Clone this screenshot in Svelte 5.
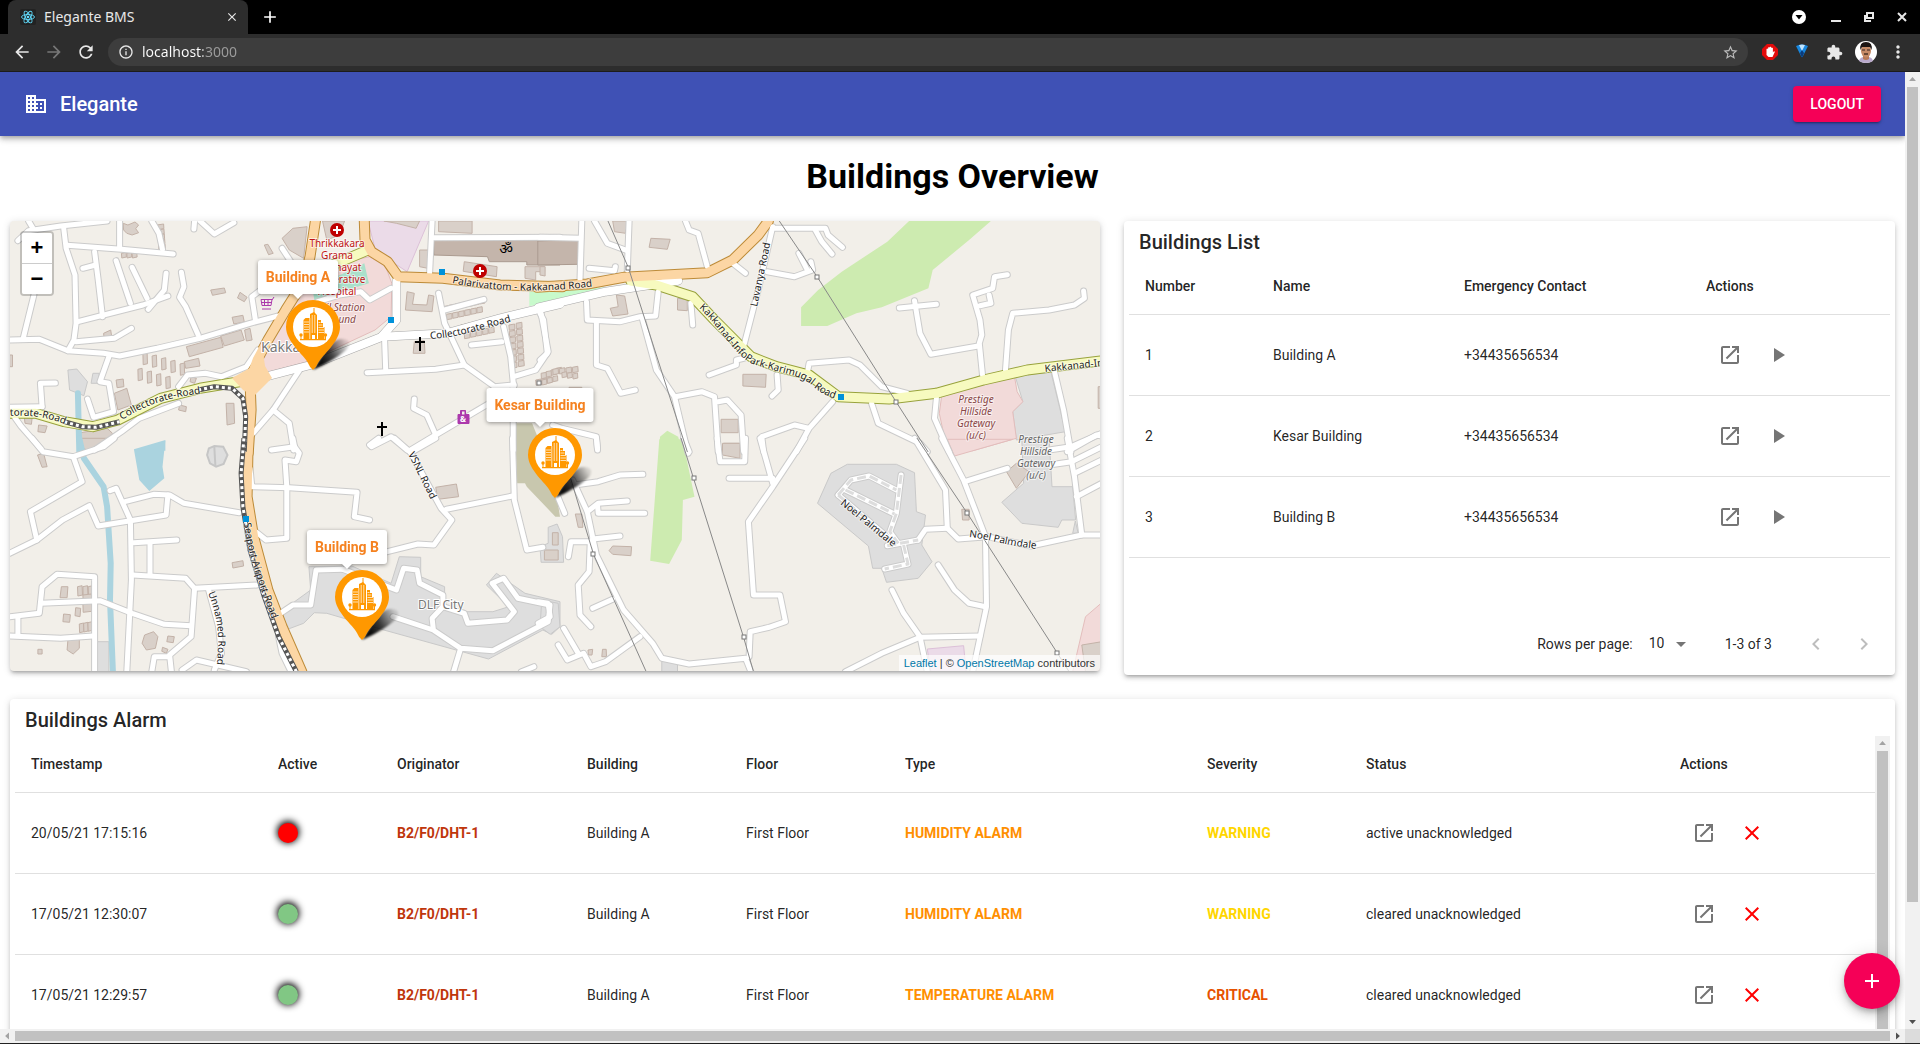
<script>
  const icons = {
    open: 'M19 19H5V5h7V3H5c-1.11 0-2 .9-2 2v14c0 1.1.89 2 2 2h14c1.1 0 2-.9 2-2v-7h-2v7zM14 3v2h3.59l-9.83 9.83 1.41 1.41L19 6.41V10h2V3h-7z',
    play: 'M8 5v14l11-7z',
    clear: 'M19 6.41L17.59 5 12 10.59 6.41 5 5 6.41 10.59 12 5 17.59 6.41 19 12 13.41 17.59 19 19 17.59 13.41 12z',
    add: 'M19 13h-6v6h-2v-6H5v-2h6V5h2v6h6v2z',
    down: 'M7 10l5 5 5-5z',
    left: 'M15.41 7.41L14 6l-6 6 6 6 1.41-1.41L10.83 12z',
    right: 'M10 6L8.59 7.41 13.17 12l-4.58 4.59L10 18l6-6z',
    domain: 'M12 7V3H2v18h20V7H12zM6 19H4v-2h2v2zm0-4H4v-2h2v2zm0-4H4V9h2v2zm0-4H4V5h2v2zm4 12H8v-2h2v2zm0-4H8v-2h2v2zm0-4H8V9h2v2zm0-4H8V5h2v2zm10 12h-8v-2h2v-2h-2v-2h2v-2h-2V9h8v10zm-2-8h-2v2h2v-2zm0 4h-2v2h2v-2z',
    back: 'M20 11H7.83l5.59-5.59L12 4l-8 8 8 8 1.41-1.41L7.83 13H20v-2z',
    forward: 'M12 4l-1.41 1.41L16.17 11H4v2h12.17l-5.58 5.59L12 20l8-8z',
    reload: 'M17.65 6.35C16.2 4.9 14.21 4 12 4c-4.42 0-7.99 3.58-7.99 8s3.57 8 7.99 8c3.73 0 6.84-2.55 7.73-6h-2.08c-.82 2.33-3.04 4-5.65 4-3.31 0-6-2.69-6-6s2.69-6 6-6c1.66 0 3.14.69 4.22 1.78L13 11h7V4l-2.35 2.35z',
    info: 'M11 7h2v2h-2zm0 4h2v6h-2zm1-9C6.48 2 2 6.48 2 12s4.48 10 10 10 10-4.48 10-10S17.52 2 12 2zm0 18c-4.41 0-8-3.59-8-8s3.59-8 8-8 8 3.59 8 8-3.59 8-8 8z',
    star: 'M22 9.24l-7.19-.62L12 2 9.19 8.63 2 9.24l5.46 4.73L5.82 21 12 17.27 18.18 21l-1.63-7.03L22 9.24zM12 15.4l-3.76 2.27 1-4.28-3.32-2.88 4.38-.38L12 6.1l1.71 4.04 4.38.38-3.32 2.88 1 4.28L12 15.4z',
    puzzle: 'M20.5 11H19V7c0-1.1-.9-2-2-2h-4V3.500C13 2.120 11.880 1 10.500 1S8 2.120 8 3.500V5H4c-1.100 0-1.990.9-1.990 2v3.800H3.500c1.490 0 2.700 1.210 2.700 2.700s-1.210 2.700-2.700 2.700H2V20c0 1.100.9 2 2 2h3.800v-1.500c0-1.490 1.210-2.700 2.700-2.700 1.490 0 2.700 1.210 2.700 2.700V22H17c1.100 0 2-.9 2-2v-4h1.500c1.380 0 2.500-1.120 2.500-2.500S21.880 11 20.500 11z',
    dots: 'M12 8c1.1 0 2-.9 2-2s-.9-2-2-2-2 .9-2 2 .9 2 2 2zm0 2c-1.100 0-2 .9-2 2s.9 2 2 2 2-.9 2-2-.9-2-2-2zm0 6c-1.100 0-2 .9-2 2s.9 2 2 2 2-.9 2-2-.9-2-2-2z'
  };

  const buildingCols = [
    ['Number', 128], ['Name', 191], ['Emergency Contact', 242], ['Actions', 200]
  ];
  const buildings = [
    { id: 1, name: 'Building A', phone: '+34435656534' },
    { id: 2, name: 'Kesar Building', phone: '+34435656534' },
    { id: 3, name: 'Building B', phone: '+34435656534' }
  ];

  const alarmCols = [
    ['Timestamp', 247], ['Active', 119], ['Originator', 190], ['Building', 159], ['Floor', 159],
    ['Type', 302], ['Severity', 159], ['Status', 314], ['Actions', 211]
  ];
  const alarms = [
    { time: '20/05/21 17:15:16', active: true, type: 'HUMIDITY ALARM', severity: 'WARNING', status: 'active unacknowledged' },
    { time: '17/05/21 12:30:07', active: false, type: 'HUMIDITY ALARM', severity: 'WARNING', status: 'cleared unacknowledged' },
    { time: '17/05/21 12:29:57', active: false, type: 'TEMPERATURE ALARM', severity: 'CRITICAL', status: 'cleared unacknowledged' }
  ];

  const share = (cols, w) => `${(w / cols.reduce((s, c) => s + c[1], 0)) * 100}%`;

  const markers = [
    { name: 'Building A', x: 313, y: 370, tipX: 298, w: 80 },
    { name: 'Kesar Building', x: 555, y: 498, tipX: 540, w: 107 },
    { name: 'Building B', x: 362, y: 640, tipX: 347, w: 80 }
  ];

  // Map sheets: every sheet keeps its own grid and is projected onto the common map plane.
  const sheets = [
    {
      x: 0, y: 210, kx: 2.8,
      minor: [
        '50,92 80,62 170,48 300,33', '80,33 92,55', '178,52 185,115 210,195 213,340 207,390 190,422', '188,106 340,118 485,132',
        '335,33 335,115', '425,33 445,70 455,118', '265,125 275,210 287,320', '232,175 268,165', '325,152 365,280',
        '370,172 412,265', '465,190 460,240 415,298', '218,335 400,285 470,258', '508,187 515,230 503,262 520,290 555,375',
        '95,255 65,385', '27,390 110,388 190,422 290,430 335,438 440,415 560,385 700,340 790,315', '213,395 320,385 368,355',
        '305,440 280,515 305,520 318,605 262,622 245,567', '155,519 113,520 118,590', '27,592 118,590', '27,600 60,650 115,717',
        '715,330 705,260 730,240', '840,478 765,600 700,680', '765,600 810,640 822,720', '500,530 525,495 575,490 620,500 690,470 722,420',
        '545,33 543,57', '560,33 600,72 655,38', '790,115 820,165', '1210,33 1203,190', '1215,83 1568,82',
        '1228,250 1245,340 1300,465 1385,530 1440,525', '1245,300 1355,268', '1410,350 1430,440 1438,530', '1515,310 1535,425 1500,480 1438,500',
        '1077,390 1080,480', '1028,488 1220,478 1300,465', '1320,405 1405,395', '1160,567 1158,595 1195,615 1220,675',
        '1040,710 1095,680 1140,720', '1150,720 1220,675 1370,580', '890,275 950,255 1010,245 1035,270 1095,235', '265,720 340,665 390,625 500,580',
        '1437,520 1437,720'
      ],
      major: ['725,505 870,465 1070,380 1250,370 1400,325 1568,282', '1110,215 1110,330 1070,378'],
      yellow: ['27,610 100,610 180,635 260,650 330,630 450,565 560,535 700,510', '910,175 1030,120'],
      orange: ['883,33 868,140 850,215 800,300 750,390 720,450 700,510 703,600 695,730', '1020,33 1022,90 1040,125 1085,155 1115,200 1240,205 1400,225 1575,230'],
      rail: ['555,540 600,530 650,535 680,565 688,620 684,725', '180,635 230,650 270,652 335,635'],
      river: ['218,550 222,725'],
      power: [],
      site: [],
      areas: [
        ['pink', '1035,140 1080,170 1097,220 1095,320 1050,360 860,455 740,490 735,430 770,340 830,270 860,180'],
        ['lilac', '1030,33 1200,33 1140,185 1090,150 1050,115'],
        ['teal', '875,235 1020,160 1033,220 880,270'],
        ['brown', '1215,90 1568,90 1568,165 1475,165 1475,155 1370,155 1365,140 1215,135'],
        ['house', '790,85 820,55 860,50 850,145 810,120'],
        ['mint', '1482,245 1568,235 1568,275 1482,288'],
        ['olive', '1437,640 1490,640 1520,720 1437,720'],
        ['water', '378,720 463,692 463,722'],
        ['grey', '190,480 215,477 245,515 235,557 195,540'],
        ['grey', '260,490 278,490 275,520 255,520'],
        ['house', '225,668 300,655 315,670 290,700 230,720'],
        ['house', '345,40 358,45 378,36 388,45 380,56 388,68 370,75 355,70 346,60'],
        ['house', '522,410 618,382 625,412 530,440'],
        ['house', '618,378 675,360 684,390 628,408'],
        ['house', '685,360 700,355 706,390 690,393'],
        ['house', '590,240 628,234 632,248 595,256'],
        ['house', '672,247 692,262 684,275 665,264'],
        ['house', '650,322 680,316 684,336 655,342'],
        ['house', '290,370 310,360 314,388 292,392'],
        ['house', '320,550 355,535 368,585 330,600'],
        ['house', '325,510 345,507 347,530 328,533'],
        ['house', '516,455 556,445 560,468 520,475'],
        ['house', '740,105 750,103 765,130 752,134'],
        ['house', '633,580 655,580 657,640 636,645'],
        ['house', '108,645 132,648 126,668 106,665'],
        ['house', '68,622 90,624 88,643 70,640'],
        ['house', '903,33 965,33 950,75 915,90'],
        ['house', '1075,33 1175,33 1165,55 1110,40'],
        ['house', '1228,33 1322,33 1322,70 1228,65'],
        ['house', '1175,120 1200,120 1198,175 1175,170'],
        ['house', '1300,155 1392,170 1390,200 1297,184'],
        ['house', '1470,170 1525,170 1525,185 1500,185 1500,210 1470,205'],
        ['house', '1140,245 1160,250 1155,283 1195,285 1200,255 1215,258 1210,305 1135,300'],
        ['house', '1160,395 1188,392 1190,430 1157,430'],
        ['house', '27,435 35,435 35,470 27,470'],
        ['house', '535,500 550,505 545,520 532,515'],
        ['house', '478,548 495,552 490,565 476,560'],
        ['house', '503,585 522,590 520,605 500,600']
      ],
      rows: [
        [400, 430, 5, 12, 34, 26, 8], [386, 478, 4, 12, 34, 26, 8], [440, 45, 6, 18, 14, 1, 15], [340, 130, 3, 13, 14, 15, 0],
        [1240, 290, 7, 15, 16, 17, -4], [1250, 313, 6, 15, 16, 17, -4], [1290, 345, 6, 15, 16, 17, -4], [1300, 370, 5, 15, 16, 17, -4],
        [1425, 345, 7, 16, 16, 1, 19], [1445, 340, 7, 16, 16, 1, 19], [1515, 490, 4, 15, 16, 14, -5], [1500, 510, 3, 15, 16, 15, -3]
      ]
    },
    {
      x: 540, y: 210, kx: 2.75,
      minor: [
        '0,82 112,85', '115,33 110,210', '150,33 185,100 240,122', '245,33 240,180', '135,175 205,182 207,170', '400,33 410,60 435,70 460,170',
        '525,155 565,190', '645,55 785,55 792,75 832,112', '757,60 775,95 803,132', '712,130 735,180', '745,155 750,180 700,200 625,185',
        '640,50 600,240 560,410', '560,445 540,450 540,465 465,495', '128,275 130,330 220,335 275,320 318,318 325,245',
        '155,340 155,465 185,475 222,550 262,540', '415,280 420,345', '280,320 320,480 370,560 407,730', '372,560 445,545 480,560 490,725',
        '490,575 515,570 553,615 560,725', '652,495 655,540 638,558', '735,490 740,460 850,450 880,465 940,530 1010,550',
        '805,575 740,655 705,725', '738,655 700,645 610,680 615,725', '912,580 930,640 1045,700 1065,725', '1090,565 1085,625 1125,725',
        '988,294 1090,283', '1030,272 1045,370 1075,433 1205,408', '1285,194 1250,200 1245,235 1190,255 1210,330 1215,375 1208,400 1217,495',
        '1210,287 1240,280 1235,255', '1495,243 1497,265 1470,285 1400,300 1300,310 1288,360 1280,480', '1415,485 1440,600 1460,725',
        '1450,725 1530,675 1545,678', '0,310 10,330 20,430 0,450', '35,645 60,655 155,680 158,720'
      ],
      major: ['-4,292 180,245 380,212'],
      yellow: ['250,213 320,225 420,260 480,330 580,440 650,470 740,495 820,560 960,567 1090,550 1220,510 1340,480 1545,452'],
      orange: ['-8,232 130,222 230,202 460,188 530,150 600,75 628,33'],
      rail: [], river: [], site: [],
      power: ['187,33 243,173 405,725', '658,33 763,202 980,577 1067,725'],
      areas: [
        ['green', '718,292 765,240 830,185 955,95 1015,33 1240,33 1180,90 1080,180 1068,235 940,292 870,310 790,348 718,348'],
        ['green', '330,680 350,662 380,680 390,722 328,722'],
        ['mint', '0,245 180,232 60,268 0,283'],
        ['grey', '1307,500 1405,485 1445,665 1310,690 1300,605 1328,575'],
        ['pink', '1105,555 1305,500 1312,545 1328,575 1300,605 1310,685 1190,722 1120,722 1098,610'],
        ['brown', '-6,93 107,88 105,163 -6,165'],
        ['house', '200,33 242,33 235,70 205,65'],
        ['house', '305,85 358,88 350,118 300,112'],
        ['house', '210,255 233,258 242,312 200,318 193,295 215,290'],
        ['house', '378,265 405,268 405,302 378,300'],
        ['house', '558,493 622,493 620,532 558,528'],
        ['house', '498,628 545,628 545,668 498,668'],
        ['house', '505,700 550,700 550,722 505,722'],
        ['house', '1535,530 1545,530 1545,595 1535,595'],
        ['house', '0,170 14,170 14,198 0,195'],
        ['house', '80,532 115,532 115,545 80,545']
      ],
      rows: [[35, 478, 4, 15, 16, 18, -2], [5, 510, 3, 13, 15, 15, -5], [60, 488, 3, 13, 15, 15, 2]]
    },
    {
      x: 0, y: 440, kx: 2.8,
      minor: [
        '90,-5 120,35 205,50 290,20 320,-5', '205,50 230,125 85,215 103,300', '27,340 103,300 175,240 250,197 275,258 465,225 470,165',
        '350,185 430,163 475,165 515,190 670,218', '308,152 325,145 365,240 368,420 355,695', '375,308 495,300', '420,310 420,405',
        '372,405 520,415 545,445 720,435', '545,445 535,590 475,645 480,695', '425,695 432,650 475,650', '510,690 550,660 690,695',
        '600,690 620,640 612,560 583,445', '265,695 265,410 160,403 118,440 110,520 27,530', '115,490 280,482 370,520 460,553 535,557',
        '50,530 50,585', '27,588 170,595 260,588', '700,85 705,140 810,143 1000,157 992,230 1035,240', '803,140 803,295 745,300 710,270',
        '760,30 825,20 838,40 830,65 798,60 803,140', '820,-5 825,20', '1035,15 1060,-5', '1105,-5 1150,38 1220,-5',
        '1150,38 1235,205 1265,240 1215,315 1170,312 1085,335', '1250,208 1435,168', '1435,-5 1440,180 1475,330 1520,322', '780,590 790,640 815,695',
        '785,520 820,495 870,495 885,390 960,388', '960,388 1110,450 1130,385 1168,390 1175,430 1240,465 1240,500 1210,535 1213,565',
        '1100,530 1213,570 1290,625 1380,632 1535,545 1540,495 1450,475 1410,415 1378,430 1440,515 1420,540 1310,550 1300,520 1240,500',
        '1290,625 1270,695', '1495,680 1460,695'
      ],
      major: [], yellow: [], site: [], power: [],
      orange: ['695,-5 692,170 710,290 750,450 790,560 845,695'],
      rail: ['683,-5 675,100 680,200 700,330 740,470 780,590 830,695'],
      river: ['222,-5 235,55 290,140 300,200 310,370 308,480 316,695'],
      areas: [
        ['grey', '865,380 985,378 1095,430 1118,350 1178,352 1178,410 1245,440 1245,495 1300,515 1380,515 1425,500 1362,435 1390,400 1470,460 1568,485 1568,560 1545,583 1520,570 1368,657 1075,570 915,520 880,518 850,550 800,570 780,520 870,450'],
        ['water', '375,28 463,0 455,80 460,115 418,153 390,120'],
        ['grey', '272,605 305,605 305,695 272,695'],
        ['ring', '585,25 600,18 625,20 637,45 626,72 605,80 588,70 580,45'],
        ['ring', '600,20 603,78'],
        ['house', '105,45 122,40 132,80 118,82'],
        ['house', '225,-5 320,-5 245,30 230,25'],
        ['house', '650,368 680,362 682,378 652,384'],
        ['house', '1220,142 1278,132 1284,170 1226,178'],
        ['house', '172,440 190,440 188,473 168,473'],
        ['house', '178,522 197,524 195,547 176,545'],
        ['house', '190,600 222,598 222,625 205,642 188,630'],
        ['house', '405,585 430,575 442,590 435,625 410,630 398,610'],
        ['house', '470,588 488,590 485,608 467,605'],
        ['house', '455,622 470,628 466,640 453,634'],
        ['house', '106,628 118,628 118,642 106,642'],
        ['house', '212,503 226,505 224,530 210,527'],
        ['olive', '1443,-2 1480,-2 1560,175 1568,230 1555,230 1475,140 1470,130 1448,130'],
        ['grey', '1535,262 1560,252 1575,290 1578,367 1515,367 1512,320 1535,310']
      ],
      rows: [[217, 440, 3, 13, 28, 15, 0], [232, 465, 2, 24, 26, 0, 26], [222, 552, 3, 12, 26, 12, -2]]
    },
    {
      x: 540, y: 440, kx: 2.75,
      minor: [
        '395,-5 410,35', '487,-5 495,65 563,65 565,-5', '520,115 640,115', '605,-5 640,130', '728,-5 640,140 573,245 587,465 660,465 675,545 630,562 578,575 575,650',
        '90,120 130,215 155,345 230,510 310,610 335,655 410,672 565,655 580,695', '95,135 160,125 220,105 283,103', '130,215 160,190 240,183',
        '158,195 160,220 288,220', '145,297 220,288', '140,305 85,305 78,350', '138,310 135,395 105,435 110,525 140,560', '145,505 200,478',
        '275,590 180,665 140,680 120,640 75,660 50,615', '65,565 105,640', '155,-5 158,25', '45,160 68,220', '1030,-5 1115,150 1120,265 1150,297 1230,290 1350,318 1490,285 1545,285',
        '1120,265 1060,268 1040,300', '1105,-5 1165,120 1225,290 1228,500 1190,695', '1168,125 1285,85', '1450,-5 1470,110 1490,285', '1470,100 1545,60',
        '1475,170 1545,130', '1400,30 1460,20 1545,-20', '1400,75 1462,65 1545,20', '1095,375 1140,450 1180,490 1225,500', '968,450 1000,520 1045,590 1065,695',
        '1045,592 1210,588', '1045,592 940,640 840,695', '-5,485 22,490 28,530 -5,550'
      ],
      major: [], yellow: [], orange: [], rail: [], river: [],
      site: ['820,165 855,120 905,108 980,150', '840,150 975,222', '993,105 980,220 962,275 985,310', '955,317 1040,300', '1000,315 1012,372 948,387', '820,165 965,300'],
      power: ['388,-5 422,115 560,592 587,695', '1037,-5 1175,220 1423,640 1455,695', '80,100 147,343 292,695'],
      areas: [
        ['grey', '763,190 800,100 845,73 980,73 1030,98 1035,215 1060,225 1050,315 1078,365 1040,415 953,427 940,385 915,385 903,318'],
        ['grey', '1325,-2 1400,-2 1408,140 1465,140 1473,240 1435,240 1425,262 1325,250 1270,187 1330,130'],
        ['pink', '1120,-2 1300,-2 1140,48'],
        ['pink', '1545,488 1500,530 1465,695 1545,695'],
        ['house', '1490,615 1545,605 1545,695 1500,695'],
        ['house', '1283,95 1310,70 1345,95 1310,145'],
        ['lilac', '1065,627 1165,617 1172,695 1075,695'],
        ['green', '328,-2 392,-2 425,170 393,180 390,300 355,372 303,362'],
        ['grey', '5,480 50,490 55,560 28,583 0,560'],
        ['grey', '335,662 378,672 378,695 335,695'],
        ['house', '200,318 252,320 250,347 200,343 190,332'],
        ['house', '502,10 550,10 550,55 502,45'],
        ['house', '97,222 115,222 118,262 105,262'],
        ['house', '34,278 50,278 50,315 34,315'],
        ['house', '12,330 50,330 50,360 12,360'],
        ['house', '1160,208 1180,208 1180,240 1162,240'],
        ['house', '132,630 145,628 143,645 133,645'],
        ['house', '172,628 182,628 183,650 170,650'],
        ['grey', '1465,280 1472,243 1480,280']
      ],
      rows: []
    }
  ];

  const project = (s, pts) =>
    pts.split(' ').map((p) => {
      const [x, y] = p.split(',').map(Number);
      return `${(s.x + x / s.kx).toFixed(1)},${(s.y + y / 3).toFixed(1)}`;
    }).join(' ');

  const lines = (kind) => sheets.flatMap((s) => s[kind].map((p) => project(s, p)));
  const areas = sheets.flatMap((s) => s.areas.map(([kind, p]) => [kind, project(s, p)]));
  // Terraced houses: start, count, size and step of each row.
  const plots = sheets.flatMap((s) =>
    s.rows.flatMap(([x, y, n, w, h, dx, dy]) =>
      Array.from({ length: n }, (_, i) => {
        const px = x + dx * i, py = y + dy * i;
        return project(s, `${px},${py} ${px + w},${py - 3} ${px + w + 1},${py + h - 3} ${px + 1},${py + h}`);
      })
    )
  );
  const drawOrder = [
    ['minor', 'minor'], ['site', 'minor'], ['major', 'major'], ['yellow', 'yellow'], ['orange', 'orange']
  ];
  const pylons = [[628, 268], [817, 277], [896, 402], [694, 478], [744, 637], [593, 554], [967, 513], [1057, 653], [539, 383]];
  const stops = [[442, 272], [391, 320], [246, 519], [841, 397]];
  const roadNames = [
    ['n1', 'M10 416 Q40 414 64 424', 'torate-Road'],
    ['n2', 'M122 420 C150 402 170 398 204 393', 'Collectorate-Road'],
    ['n3', 'M452 283 C490 291 540 294 604 285', 'Palarivattom - Kakkanad Road'],
    ['n4', 'M430 339 C460 337 480 330 520 319', 'Collectorate Road'],
    ['n5', 'M757 307 L771 240', 'Lavanya Road'],
    ['n6', 'M699 308 C716 322 735 357 753 364 C790 376 800 374 815 388 C825 396 833 399 850 402', 'Kakkanad-InfoPark-Karimugal Road'],
    ['n7', 'M1045 372 L1150 361', 'Kakkanad-InfoPark'],
    ['n8', 'M840 504 L894 548', 'Noel Palmdale'],
    ['n9', 'M969 537 C990 539 1010 547 1040 549', 'Noel Palmdale'],
    ['n10', 'M408 454 L432 502', 'VSNL Road'],
    ['n11', 'M244 523 C248 560 262 590 278 636', 'Seaport-Airport-Road'],
    ['n12', 'M208 593 C219 620 220 640 216 672', 'Unnamed Road']
  ];
  const places = [
    ['hospital', 337, 247, ['Thrikkakara', 'Grama', 'Panchayat', 'Cooperative', 'Hospital']],
    ['ground', 339, 311, ['Civil Station', 'Ground']],
    ['ground', 976, 403, ['Prestige', 'Hillside', 'Gateway', '(u/c)']],
    ['plain', 1036, 443, ['Prestige', 'Hillside', 'Gateway', '(u/c)']]
  ];

  let rowsPerPage = $state('10');
</script>

{#snippet icon(name, size = 24)}
  <svg class="icon" width={size} height={size} viewBox="0 0 24 24" aria-hidden="true"><path d={icons[name]} /></svg>
{/snippet}

<div class="window">
  <header class="chrome">
    <div class="tabs">
      <div class="tab">
        <svg class="favicon" width="16" height="16" viewBox="0 0 16 16" aria-hidden="true">
          <rect width="16" height="16" rx="2" fill="#222" />
          <g fill="none" stroke="#61dafb" stroke-width=".9">
            <ellipse cx="8" cy="8" rx="6.500" ry="2.500" />
            <ellipse cx="8" cy="8" rx="6.500" ry="2.500" transform="rotate(60 8 8)" />
            <ellipse cx="8" cy="8" rx="6.500" ry="2.500" transform="rotate(120 8 8)" />
          </g>
          <circle cx="8" cy="8" r="1.300" fill="#61dafb" />
        </svg>
        <span class="tab-title">Elegante BMS</span>
        <button class="bare" aria-label="Close tab">{@render icon('clear', 14)}</button>
      </div>
      <button class="bare new-tab" aria-label="New tab">{@render icon('add', 20)}</button>
      <div class="win-buttons">
        <button class="bare" aria-label="Search tabs">
          <svg width="16" height="16" viewBox="0 0 16 16"><circle cx="8" cy="8" r="7" fill="#fff" /><path d="M4.500 6h7L8 10.500z" fill="#000" /></svg>
        </button>
        <button class="bare" aria-label="Minimize">
          <svg width="16" height="16" viewBox="0 0 16 16"><path d="M3 11h10v2H3z" fill="#e8e8e8" /></svg>
        </button>
        <button class="bare" aria-label="Restore">
          <svg width="16" height="16" viewBox="0 0 16 16"><path d="M6 4h6v5H6zM4 6v6h6" fill="none" stroke="#e8e8e8" stroke-width="2" /></svg>
        </button>
        <button class="bare" aria-label="Close">
          <svg width="16" height="16" viewBox="0 0 16 16"><path d="M4 4l8 8M12 4l-8 8" fill="none" stroke="#e8e8e8" stroke-width="2" /></svg>
        </button>
      </div>
    </div>
    <div class="toolbar">
      <button class="bare" aria-label="Back">{@render icon('back', 20)}</button>
      <button class="bare dim" aria-label="Forward">{@render icon('forward', 20)}</button>
      <button class="bare" aria-label="Reload">{@render icon('reload', 20)}</button>
      <div class="omnibox">
        {@render icon('info', 16)}
        <input class="url" aria-label="Address" value="localhost:3000" />
        <button class="bare" aria-label="Bookmark">{@render icon('star', 17)}</button>
      </div>
      <div class="extensions">
        <button class="bare" aria-label="Ad blocker">
          <svg width="16" height="16" viewBox="0 0 16 16"><path d="M5 0h6l5 5v6l-5 5H5l-5-5V5z" fill="#e30b0b" /><path d="M4.500 8V5q.9-.8 1.600 0V3.500q.8-.7 1.600 0V3q.9-.7 1.600 0v1q.9-.7 1.600 0v4.500l.7-1q1-.5 1.200.4L10.500 13H6.500L4.500 11z" fill="#fff" /></svg>
        </button>
        <button class="bare" aria-label="Gem">
          <svg width="14" height="16" viewBox="0 0 14 16"><path d="M1 2q6-3 12 0L7.500 13h-1z" fill="#1787e0" /><path d="M4 1q3-1 6 0L7 7z" fill="#bfe4ff" /><path d="M7 6l2 3-2 5-2-5z" fill="#0b3c7c" /></svg>
        </button>
        <button class="bare" aria-label="Extensions">{@render icon('puzzle', 17)}</button>
        <button class="bare" aria-label="Profile">
          <svg width="22" height="22" viewBox="0 0 22 22">
            <circle cx="11" cy="11" r="11" fill="#fff" />
            <path d="M4 20q1-4 5-4h4q4 0 5 4-7 4-14 0z" fill="#b9a9cc" />
            <path d="M8 14h6v4q-3 2-6 0z" fill="#b97a56" />
            <ellipse cx="11" cy="10" rx="5" ry="6.500" fill="#c68a66" />
            <path d="M5.500 9Q4 1 11 1t5.500 8L15 6H7z" fill="#1c1513" />
            <path d="M7 9h3M12 9h3" stroke="#322" stroke-width="1.200" /><path d="M9 13h4" stroke="#2c1a14" stroke-width="1.200" />
          </svg>
        </button>
        <button class="bare" aria-label="Menu">{@render icon('dots', 20)}</button>
      </div>
    </div>
  </header>

  <div class="viewport">
    <div class="page">
      <div class="appbar">
        {@render icon('domain', 24)}
        <span class="brand">Elegante</span>
        <button class="logout">LOGOUT</button>
      </div>

      <main>
        <h1>Buildings Overview</h1>

        <div class="top">
          <section class="map" aria-label="Map">
            <svg class="canvas" viewBox="10 221 1090 450" preserveAspectRatio="xMidYMid slice">
              {#each areas as [kind, p]}<polygon class="area {kind}" points={p} />{/each}
              {#each plots as p}<polygon class="area house" points={p} />{/each}
              {#each lines('river') as p}<polyline class="river" points={p} />{/each}
              {#each drawOrder as [kind, look]}
                {#each lines(kind) as p}<polyline class="case {look}" points={p} />{/each}
              {/each}
              {#each drawOrder as [kind, look]}
                {#each lines(kind) as p}<polyline class="road {look}" points={p} />{/each}
              {/each}
              <path class="junction" d="M232 378 L250 368 L262 345 L265 366 L272 378 L254 396 L243 390z" />
              {#each lines('site') as p}<polyline class="site" points={p} />{/each}
              {#each lines('rail') as p}<polyline class="rail" points={p} /><polyline class="rail-gap" points={p} />{/each}
              {#each lines('power') as p}<polyline class="power" points={p} />{/each}
              {#each pylons as [x, y]}<rect class="pylon" x={x - 2} y={y - 2} width="4" height="4" />{/each}
              {#each stops as [x, y]}<rect x={x - 3} y={y - 3} width="6" height="6" fill="#0092da" />{/each}

              {#each roadNames as [id, d, name]}
                <path {id} {d} fill="none" />
                <text class="road-name"><textPath href="#{id}">{name}</textPath></text>
              {/each}
              {#each places as [kind, x, y, rows]}
                {#each rows as row, i}<text class="place {kind}" {x} y={y + i * 12}>{row}</text>{/each}
              {/each}
              <text class="town" x="261" y="352">Kakkanad</text>
              <text class="town small" x="418" y="609">DLF City</text>
              <text class="om" x="506" y="254">ॐ</text>

              {#each [[337, 230], [480, 271]] as [x, y]}
                <circle cx={x} cy={y} r="7" fill="#bf0000" />
                <path d="M{x - 4} {y}h8M{x} {y - 4}v8" stroke="#fff" stroke-width="2" />
              {/each}
              {#each [[420, 344], [382, 429]] as [x, y]}
                <path d="M{x - 5} {y - 2}h10M{x} {y - 7}v14" stroke="#000" stroke-width="2" />
              {/each}
              <path d="M261 299.500h11l-1 6h-9zM272 300l2-3M262 309h9M264.500 299v6M268 299v6M261 302.500h10" fill="none" stroke="#ac39ac" />
              <path d="M458 414.500h11v9h-11zM460.500 414.500v-4h5v4" fill="#ac39ac" stroke="#ac39ac" />
              <path d="M462 411.500h2.500v3H462z" fill="#f2efe9" />
              <text class="bag" x="463" y="422">&amp;</text>

              <defs>
                <linearGradient id="shade" x1=".2" y1=".7" x2="1" y2=".3">
                  <stop offset="0" stop-color="#000" stop-opacity=".95" />
                  <stop offset=".4" stop-color="#000" stop-opacity=".75" />
                  <stop offset="1" stop-color="#000" stop-opacity=".12" />
                </linearGradient>
              </defs>
              {#each markers as m}
                <g transform="translate({m.x} {m.y})">
                  <path class="shadow" d="M0 0C8 -12 16 -29 27 -31C37 -32 39 -25 32 -19C24 -12 11 -5 0 0z" fill="url(#shade)" />
                  <path d="M0 0Q-3 -2 -5 -7C-9 -15 -27 -28 -27 -43A27 27 0 0 1 27 -43C27 -28 9 -15 5 -7Q3 -2 0 0z" fill="#ff9800" />
                  <circle cy="-43" r="20" fill="#fff" />
                  <g transform="translate(0 -43)" fill="#ff9800">
                    <path d="M-3 12V-13L1 -15 4 -12V12z" />
                    <path d="M-9.500 12V-7l2-2h4.500V12zM5 12V-7h3v3h2v4h1.500v12z" />
                    <path d="M.5 -19h1v5h-1zM-13 12h26v1.300h-26z" />
                    <circle cx="-12" cy="8" r="1.700" /><circle cx="12.500" cy="8" r="1.700" />
                    <path d="M-12.500 8h1v5h-1zM12 8h1v5h-1z" />
                    <path d="M-9 -5h5M-9 -2.500h5M-9 0h5M-9 2.500h5M-9 5h5M5.500 -4.500h2M5.500 -2h4M5.500 .5h5.500M5.500 3h5.500M5.500 5.500h5.500M-.800 -12v18M1.800 -12v18M-3.200 -9v21M4.500 -8v20" fill="none" stroke="#fff" stroke-width=".700" />
                    <path d="M-1 8h3v4h-3z" fill="#fff" />
                  </g>
                </g>
                <g class="tip">
                  <rect x={m.tipX - m.w / 2} y={m.y - 110} width={m.w} height="34" rx="3" fill="#fff" />
                  <path d="M{m.tipX - 6} {m.y - 77}h12l-6 6z" fill="#fff" />
                  <text x={m.tipX} y={m.y - 88}>{m.name}</text>
                </g>
              {/each}
            </svg>
            <div class="zoom">
              <button aria-label="Zoom in">+</button>
              <button aria-label="Zoom out">−</button>
            </div>
            <div class="credit"><a href="#leaflet">Leaflet</a> | © <a href="#osm">OpenStreetMap</a> contributors</div>
          </section>

          <section class="card list">
            <h2>Buildings List</h2>
            <table>
              <colgroup>{#each buildingCols as [, w]}<col style:width={share(buildingCols, w)} />{/each}</colgroup>
              <thead><tr>{#each buildingCols as [name]}<th>{name}</th>{/each}</tr></thead>
              <tbody>
                {#each buildings as b}
                  <tr>
                    <td>{b.id}</td>
                    <td>{b.name}</td>
                    <td>{b.phone}</td>
                    <td>
                      <div class="actions">
                        <button aria-label="Open {b.name}">{@render icon('open')}</button>
                        <button aria-label="Run {b.name}">{@render icon('play')}</button>
                      </div>
                    </td>
                  </tr>
                {/each}
              </tbody>
            </table>
            <div class="pager">
              <label for="rows">Rows per page:</label>
              <div class="select">
                <select id="rows" bind:value={rowsPerPage}>
                  <option>10</option><option>25</option><option>50</option>
                </select>
                {@render icon('down')}
              </div>
              <span class="range">1-3 of 3</span>
              <button disabled aria-label="Previous page">{@render icon('left')}</button>
              <button disabled aria-label="Next page">{@render icon('right')}</button>
            </div>
          </section>
        </div>

        <section class="card alarms">
          <h2>Buildings Alarm</h2>
          <div class="scroller">
            <table>
              <colgroup>{#each alarmCols as [, w]}<col style:width={share(alarmCols, w)} />{/each}</colgroup>
              <thead><tr>{#each alarmCols as [name]}<th>{name}</th>{/each}</tr></thead>
              <tbody>
                {#each alarms as a}
                  <tr>
                    <td>{a.time}</td>
                    <td><span class="dot" class:on={a.active}></span></td>
                    <td class="origin">B2/F0/DHT-1</td>
                    <td>Building A</td>
                    <td>First Floor</td>
                    <td class="type">{a.type}</td>
                    <td class={a.severity.toLowerCase()}>{a.severity}</td>
                    <td>{a.status}</td>
                    <td>
                      <div class="actions">
                        <button aria-label="Open alarm">{@render icon('open')}</button>
                        <button class="remove" aria-label="Clear alarm">{@render icon('clear')}</button>
                      </div>
                    </td>
                  </tr>
                {/each}
              </tbody>
            </table>
            <div class="bar"><i class="arrow up"></i><i class="thumb"></i></div>
          </div>
        </section>
      </main>
      <button class="fab" aria-label="Add building">{@render icon('add')}</button>
    </div>
    <div class="bar side"><i class="arrow up"></i><i class="thumb"></i><i class="rest"></i><i class="arrow down"></i></div>
    <div class="bar bottom"><i class="arrow prev"></i><i class="thumb"></i><i class="arrow next"></i></div>
    <div class="corner"></div>
  </div>
</div>

<style>
  :global(body) { background: #fff; overflow: hidden; }
  .window { display: flex; flex-direction: column; height: 100vh; font: 14px/20px Roboto, "Liberation Sans", sans-serif; color: rgba(0, 0, 0, .87); }
  button, input, select { font: inherit; color: inherit; border: 0; padding: 0; background: none; }
  button { cursor: pointer; display: flex; align-items: center; justify-content: center; }
  .icon { display: block; fill: currentColor; flex: none; }

  .chrome { flex: none; color: #e8e8e8; font: 14px/20px "Noto Sans", "Open Sans", sans-serif; }
  .bare { width: 32px; height: 32px; }
  .bare svg { display: block; }
  .tabs { display: flex; align-items: center; height: 34px; background: #000; padding-left: 8px; }
  .tab { display: flex; align-items: center; align-self: stretch; width: 240px; background: #2d2d2d; border-radius: 8px 8px 0 0; }
  .favicon { margin: 0 8px 0 12px; }
  .tab-title { flex: 1; }
  .new-tab { margin-left: 6px; color: #fff; }
  .win-buttons { display: flex; margin-left: auto; padding-right: 2px; gap: 1px; }
  .win-buttons .bare:first-child { margin-right: 4px; }
  .toolbar { display: flex; align-items: center; box-sizing: border-box; height: 38px; padding: 0 6px 1px; background: #2d2d2d; border-bottom: 1px solid #1c1c1c; }
  .dim { color: #777; }
  .omnibox { flex: 1; display: flex; align-items: center; height: 28px; margin-left: 6px; padding: 0 2px 0 10px; border-radius: 14px; background: #3d3d3d; }
  .omnibox .bare { color: #bbb; }
  .url { flex: 1; min-width: 0; margin-left: 8px; outline: 0; color: transparent; background: linear-gradient(90deg, #fff 61px, #9d9d9d 61px); -webkit-background-clip: text; background-clip: text; }
  .extensions { display: flex; padding-left: 6px; }

  .viewport { flex: 1; min-height: 0; display: grid; grid-template: minmax(0, 1fr) 14px / minmax(0, 1fr) 15px; border-bottom: 1px solid #222; }
  .page { position: relative; overflow: hidden; background: #fff; }
  .appbar { position: relative; display: flex; align-items: center; height: 64px; padding: 0 24px; background: #3f51b5; color: #fff; box-shadow: 0 2px 4px -1px rgba(0, 0, 0, .2), 0 4px 5px rgba(0, 0, 0, .14), 0 1px 10px rgba(0, 0, 0, .12); }
  .brand { margin-left: 12px; font-size: 20px; font-weight: 500; }
  .logout { margin-left: auto; height: 36px; padding: 0 17px; border-radius: 4px; background: #f50057; font-weight: 500; box-shadow: 0 3px 1px -2px rgba(0, 0, 0, .2), 0 2px 2px rgba(0, 0, 0, .14), 0 1px 5px rgba(0, 0, 0, .12); }
  main { display: flex; flex-direction: column; padding: 0 10px; }
  h1 { margin: 18px 0 23px; font-size: 34px; line-height: 44px; font-weight: 700; text-align: center; color: #000; }
  .top { display: grid; grid-template-columns: 1090fr 771fr; gap: 24px; align-items: start; margin-bottom: 24px; }
  .card, .map { box-shadow: 0 3px 3px -2px rgba(0, 0, 0, .2), 0 3px 4px rgba(0, 0, 0, .14), 0 1px 8px rgba(0, 0, 0, .12); border-radius: 4px; }
  .card { padding: 0 5px 5px; background: #fff; }
  h2 { margin: 0; padding: 5px 10px 0; font-size: 20px; line-height: 32px; font-weight: 500; }

  .map { position: relative; height: 450px; background: #f2efe9; overflow: hidden; }
  .canvas { display: block; width: 100%; height: 100%; }
  .area { stroke-width: 1; }
  .pink { fill: #f2dad9; stroke: #e3bdbc; }
  .lilac { fill: #ebdbe8; stroke: #dcc0d8; }
  .teal { fill: #aae0cb; }
  .mint { fill: #c8facc; }
  .green { fill: #cdebb0; }
  .olive { fill: #c8c7ae; }
  .grey { fill: #dedede; stroke: #c9c9c9; }
  .area.ring { fill: #dedede; stroke: #c6c6c6; stroke-width: 2; }
  .water { fill: #aad3df; }
  .brown { fill: #c4b5ab; stroke: #ab9b90; }
  .house { fill: #d9d0c9; stroke: #c3b2a8; }
  polyline { fill: none; stroke-linejoin: round; stroke-linecap: round; }
  .river { stroke: #aad3df; stroke-width: 6; }
  .case.minor { stroke: #cbcbcb; stroke-width: 7; }
  .road.minor { stroke: #fff; stroke-width: 5; }
  .case.major { stroke: #a8a8a8; stroke-width: 9; }
  .road.major { stroke: #fff; stroke-width: 8; }
  .case.yellow { stroke: #98a23c; stroke-width: 11; }
  .road.yellow { stroke: #f7fabf; stroke-width: 9; }
  .case.orange { stroke: #bd8b38; stroke-width: 11; }
  .road.orange { stroke: #fcd6a4; stroke-width: 9; }
  .junction { fill: #fcd6a4; }
  .site { stroke: #ddd; stroke-width: 3; stroke-dasharray: 9 4; stroke-linecap: butt; }
  .rail { stroke: #555; stroke-width: 5; stroke-linecap: butt; }
  .rail-gap { stroke: #fff; stroke-width: 3; stroke-dasharray: 3 3; stroke-linecap: butt; }
  .power { stroke: #888; stroke-width: 1; }
  .pylon { fill: #fff; stroke: #777; }
  .shadow { filter: blur(1px); }
  text { font-family: "Noto Sans", "Open Sans", sans-serif; paint-order: stroke; stroke-linejoin: round; }
  .road-name { font-size: 10px; fill: #222; stroke: rgba(255, 255, 255, .5); stroke-width: 2; }
  .place { font-size: 10px; text-anchor: middle; stroke: rgba(255, 255, 255, .6); stroke-width: 2; }
  .hospital { fill: #bf1313; }
  .ground { fill: #8a4848; font-style: italic; }
  .plain { fill: #666; font-style: italic; }
  .town { font-size: 14px; fill: #777; stroke: #fff; stroke-width: 2; }
  .town.small { font-size: 12px; }
  .om { font-size: 15px; text-anchor: middle; }
  .bag { font-size: 8px; fill: #fff; text-anchor: middle; font-weight: 700; }
  .tip { filter: drop-shadow(0 1px 2px rgba(0, 0, 0, .4)); }
  .tip text { font: 700 14px Roboto, sans-serif; fill: #f58220; text-anchor: middle; }
  .zoom { position: absolute; left: 10px; top: 10px; border: 2px solid rgba(0, 0, 0, .2); border-radius: 4px; background-clip: padding-box; }
  .zoom button { width: 30px; height: 30px; background: #fff; color: #000; font: 700 22px/30px "Liberation Sans", sans-serif; }
  .zoom button:first-child { height: 31px; border-bottom: 1px solid #ccc; box-sizing: border-box; border-radius: 2px 2px 0 0; }
  .zoom button:last-child { border-radius: 0 0 2px 2px; }
  .credit { position: absolute; right: 0; bottom: 0; padding: 0 5px; background: rgba(255, 255, 255, .7); font: 11px/16px "Liberation Sans", sans-serif; color: #333; }
  .credit a { color: #0078a8; text-decoration: none; }

  table { width: 100%; table-layout: fixed; border-collapse: separate; border-spacing: 0; }
  th, td { padding: 0 16px; text-align: left; border-bottom: 1px solid #e0e0e0; white-space: nowrap; }
  th { height: 56px; font-weight: 500; }
  td { height: 80px; }
  .actions { display: flex; }
  .actions button { width: 48px; height: 48px; color: #757575; }
  .actions .remove { color: #f00; }
  .list { display: flex; flex-direction: column; min-height: 449px; }
  .pager { display: flex; align-items: center; justify-content: flex-end; height: 52px; margin-top: auto; padding-right: 2px; }
  .select { position: relative; display: flex; align-items: center; margin: 0 32px 0 8px; }
  .select select { appearance: none; width: 52px; padding: 0 24px 2px 8px; outline: 0; }
  .select .icon { position: absolute; right: 0; color: #757575; pointer-events: none; }
  .range { margin-right: 20px; }
  .pager button { width: 48px; height: 48px; color: rgba(0, 0, 0, .26); }

  .scroller { display: grid; grid-template-columns: minmax(0, 1fr) 15px; }
  .dot { display: block; width: 20px; height: 20px; border-radius: 50%; background: #81c784; box-shadow: 0 -1px 7px 1px #000; }
  .dot.on { background: #f00; }
  .origin { color: #bf360c; font-weight: 700; }
  .type { color: #ff8f00; font-weight: 700; }
  .warning { color: #ffd600; font-weight: 700; }
  .critical { color: #e65100; font-weight: 700; }

  .bar { display: flex; flex-direction: column; align-items: center; background: #f1f1f1; }
  .thumb { flex: 1; width: 11px; background: #c1c1c1; }
  .arrow { flex: none; width: 15px; height: 15px; background: #505050; clip-path: polygon(27% 40%, 73% 40%, 50% 66%); }
  .arrow.up { background: #a3a3a3; clip-path: polygon(27% 60%, 73% 60%, 50% 34%); }
  .arrow.prev { background: #a3a3a3; clip-path: polygon(60% 27%, 60% 73%, 34% 50%); }
  .arrow.next { clip-path: polygon(40% 27%, 40% 73%, 66% 50%); }
  .side .thumb { flex: 815; }
  .side .rest { flex: 112; }
  .bottom { flex-direction: row; }
  .bottom .thumb { width: auto; height: 10px; }
  .corner { background: #dcdcdc; }
  .fab { position: absolute; right: 5px; bottom: 20px; width: 56px; height: 56px; border-radius: 50%; background: #f50057; color: #fff; box-shadow: 0 3px 5px -1px rgba(0, 0, 0, .2), 0 6px 10px rgba(0, 0, 0, .14), 0 1px 18px rgba(0, 0, 0, .12); }
</style>
